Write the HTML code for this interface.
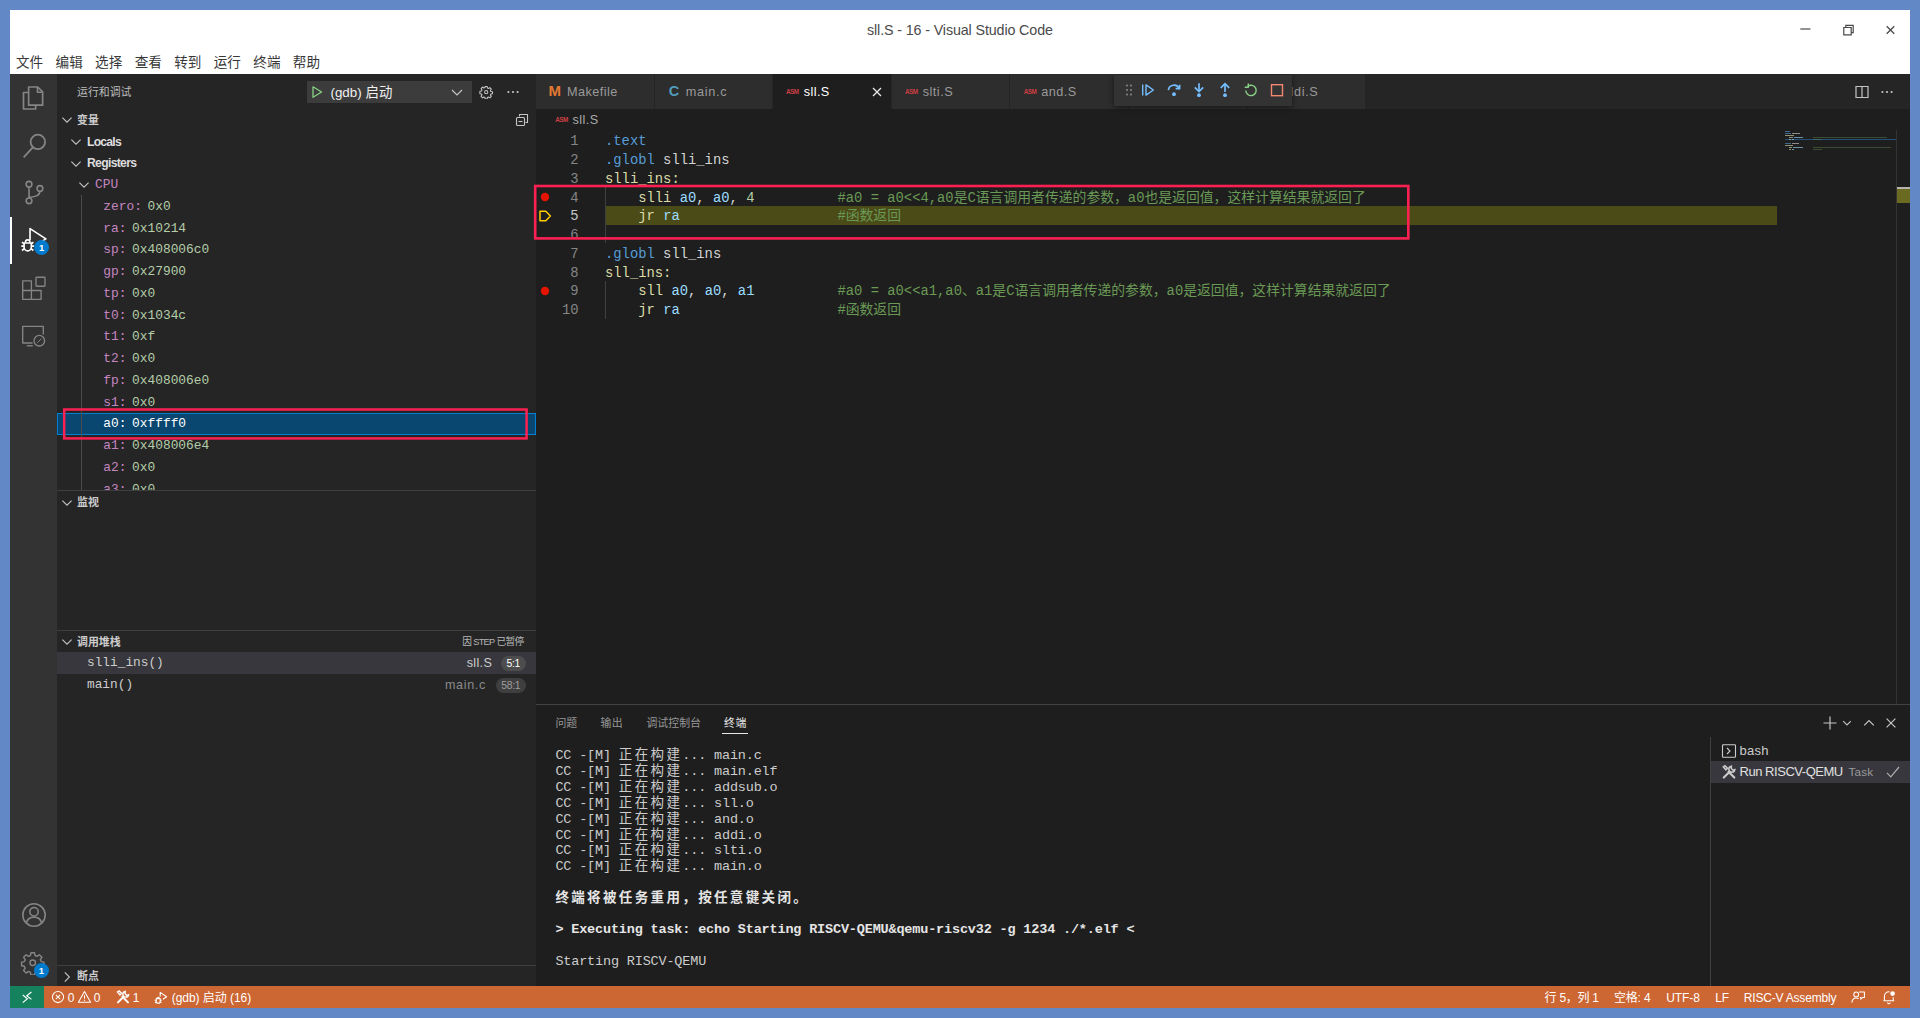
<!DOCTYPE html>
<html lang="zh-CN"><head><meta charset="utf-8"><title>sll.S - 16 - Visual Studio Code</title>
<style>
html,body{margin:0;padding:0;}
body{width:1920px;height:1018px;overflow:hidden;position:relative;background:#6388c6;
 font-family:"Liberation Sans","Noto Sans CJK SC",sans-serif;font-size:13px;color:#ccc;}
body>div,body>svg{position:absolute;box-sizing:border-box;white-space:pre;}
body>div{overflow:visible;}
.m{font-family:"Liberation Mono","Noto Sans CJK SC",monospace;}
.b{font-weight:bold;}
span.n{color:#c586c0;}
span.v{color:#b5cea8;}
span.k{color:#569cd6;}
span.r{color:#9cdcfe;}
span.c{color:#6a9955;}
span.f{color:#dcdcaa;}
span.d{color:#d4d4d4;}
span.cj{font-family:"Noto Sans CJK SC",sans-serif;line-height:0;}
.t{letter-spacing:-0.17px;}
span.tz{font-family:"Noto Sans CJK SC",sans-serif;letter-spacing:2.36px;line-height:0;}
span.gv{margin-left:5.6px;}
.h{letter-spacing:0px;}

</style></head>
<body>
<div style="left:10px;top:10px;width:1900px;height:998px;background:#1e1e1e;"></div>
<div style="left:10px;top:10px;width:1900px;height:64px;background:#ffffff;"></div>
<div style="left:867.0px;top:20.3px;height:20px;line-height:20px;font-size:14.3px;color:#4a4a4a;letter-spacing:-0.125px;">sll.S - 16 - Visual Studio Code</div>
<svg style="left:1798px;top:22px;" width="16" height="16" viewBox="0 0 16 16" fill="none"><path d="M2.300 7h10.200" stroke="#4a4a4a" stroke-width="1.2"/></svg>
<svg style="left:1840.5px;top:21.5px;" width="16" height="16" viewBox="0 0 16 16" fill="none"><path d="M2.800 5.500h7.400v7.400h-7.400z M4.800 5.300v-2h7.400v7.400h-1.800" stroke="#4a4a4a" stroke-width="1.2"/></svg>
<svg style="left:1883px;top:22px;" width="16" height="16" viewBox="0 0 16 16" fill="none"><path d="M3.700 4.200l7.600 7.600M11.300 4.200l-7.600 7.600" stroke="#4a4a4a" stroke-width="1.3"/></svg>
<div style="left:16.0px;top:53.0px;height:20px;line-height:20px;font-size:13.6px;color:#383838;">文件</div>
<div style="left:55.55px;top:53.0px;height:20px;line-height:20px;font-size:13.6px;color:#383838;">编辑</div>
<div style="left:95.1px;top:53.0px;height:20px;line-height:20px;font-size:13.6px;color:#383838;">选择</div>
<div style="left:134.65px;top:53.0px;height:20px;line-height:20px;font-size:13.6px;color:#383838;">查看</div>
<div style="left:174.2px;top:53.0px;height:20px;line-height:20px;font-size:13.6px;color:#383838;">转到</div>
<div style="left:213.75px;top:53.0px;height:20px;line-height:20px;font-size:13.6px;color:#383838;">运行</div>
<div style="left:253.3px;top:53.0px;height:20px;line-height:20px;font-size:13.6px;color:#383838;">终端</div>
<div style="left:292.85px;top:53.0px;height:20px;line-height:20px;font-size:13.6px;color:#383838;">帮助</div>
<div style="left:10px;top:74px;width:47px;height:912px;background:#333333;"></div>
<div style="left:57px;top:74px;width:479px;height:912px;background:#252526;"></div>
<div style="left:536px;top:74px;width:1374px;height:35px;background:#252526;"></div>
<div style="left:10px;top:986px;width:1900px;height:22px;background:#cc6633;"></div>
<div style="left:10px;top:986px;width:33.5px;height:22px;background:#16825d;"></div>
<svg style="left:18.4px;top:82.8px;" width="30" height="30" viewBox="0 0 24 24" fill="none"><g stroke="#858585" stroke-width="1.35" stroke-linejoin="round" fill="none"><path d="M8.5 6.5V3.2h7.3l3.9 3.9v10.6H8.5z"/><path d="M15.6 3.4v4h4"/><path d="M8.5 7.6H4.4v13.2h9.7v-3"/></g></svg>
<svg style="left:18.7px;top:129.7px;" width="31" height="31" viewBox="0 0 24 24" fill="none"><g stroke="#858585" stroke-width="1.4" fill="none"><circle cx="14.6" cy="9.2" r="5.6"/><path d="M10.7 13.4L3.6 21.2"/></g></svg>
<svg style="left:19.55px;top:178.45px;" width="28.5" height="28.5" viewBox="0 0 24 24" fill="none"><g stroke="#858585" stroke-width="1.35" fill="none"><circle cx="7.6" cy="5.2" r="2.4"/><circle cx="7.6" cy="19.2" r="2.4"/><circle cx="16.8" cy="8.8" r="2.4"/><path d="M7.6 7.6v9.2M16.8 11.2c0 3.6-3.6 4.4-9.2 5.2"/></g></svg>
<div style="left:10px;top:217px;width:2px;height:47px;background:#ffffff;"></div>
<svg style="left:20.0px;top:226.0px;" width="28" height="28" viewBox="0 0 24 24" fill="none"><g stroke="#ffffff" stroke-width="1.4" fill="none" stroke-linejoin="round"><path d="M8.600 12.100V2.200L22.200 11l-5.400 3.500"/><g transform="translate(-1.700,0.400)"><path d="M5.200 14.200h6.200v3.600a3.100 3.100 0 0 1-6.200 0z"/><path d="M6.400 14v-.600a1.900 1.900 0 0 1 3.800 0v.600"/><path d="M2.800 16.800h2.400M11.400 16.800h2.400M3.400 13.400l1.800 1.600M13.200 13.400l-1.800 1.600M3.400 20.600l2-1.600M13.200 20.600l-2-1.600"/></g></g></svg>
<div style="left:34.1px;top:240.3px;width:15px;height:15px;background:#007acc;border-radius:8px;"></div>
<div class="b" style="left:-358.4px;width:800px;text-align:center;top:240.3px;height:15px;line-height:15px;font-size:9.5px;color:#fff;">1</div>
<svg style="left:10px;top:270px;" width="48" height="38" viewBox="0 0 48 38" fill="none"><g stroke="#858585" stroke-width="1.35" fill="none" stroke-linejoin="round"><path d="M12.7 10.900h8.700v9.600h9.700v8.800H12.700z"/><path d="M12.700 20.500h8.700v8.800"/><rect x="26" y="7.200" width="9" height="9" rx="0.800"/></g></svg>
<svg style="left:10px;top:316px;" width="48" height="40" viewBox="0 0 48 40" fill="none"><g stroke="#858585" stroke-width="1.35" fill="none" stroke-linejoin="round"><path d="M22.600 27H12.700V10.400h20.600v8.200"/><path d="M16.800 29.800h6"/><circle cx="29.300" cy="24.700" r="5.300"/><path d="M27.300 26.700l4-4" stroke-width="1"/></g></svg>
<svg style="left:20.0px;top:901.0px;" width="28" height="28" viewBox="0 0 24 24" fill="none"><g stroke="#858585" stroke-width="1.35" fill="none"><circle cx="12" cy="12" r="9.6"/><circle cx="12" cy="9.2" r="3.6"/><path d="M5.4 18.8c1-3.4 3.4-5 6.6-5s5.6 1.6 6.6 5"/></g></svg>
<svg style="left:20.45px;top:949.95px;" width="25.5" height="25.5" viewBox="0 0 24 24" fill="none"><g stroke="#858585" stroke-width="1.35" fill="none" stroke-linejoin="round"><circle cx="12" cy="12" r="2.6"/><path d="M10.3 2.6h3.4l.5 2.6 1.8.8 2.2-1.5 2.4 2.4-1.5 2.2.8 1.8 2.6.5v3.4l-2.6.5-.8 1.8 1.5 2.2-2.4 2.4-2.2-1.5-1.8.8-.5 2.6h-3.4l-.5-2.6-1.8-.8-2.2 1.5-2.4-2.4 1.5-2.2-.8-1.8-2.6-.5v-3.4l2.6-.5.8-1.8-1.5-2.2 2.4-2.4 2.2 1.5 1.8-.8z"/></g></svg>
<div style="left:33.9px;top:962.7px;width:15px;height:15px;background:#007acc;border-radius:8px;"></div>
<div class="b" style="left:-358.6px;width:800px;text-align:center;top:962.7px;height:15px;line-height:15px;font-size:9.5px;color:#fff;">1</div>
<div style="left:77px;top:82.0px;height:20px;line-height:20px;font-size:10.9px;color:#bbbbbb;">运行和调试</div>
<div style="left:307px;top:81px;width:164.5px;height:21.5px;background:#3c3c3c;"></div>
<svg style="left:310px;top:85px;" width="14" height="14" viewBox="0 0 14 14" fill="none"><path d="M3 1.8l8.6 5.2L3 12.2z" stroke="#89d185" stroke-width="1.3" stroke-linejoin="round"/></svg>
<div style="left:330.4px;top:82.6px;height:20px;line-height:20px;font-size:13.4px;color:#f0f0f0;letter-spacing:0.029px;">(gdb) 启动</div>
<svg style="left:450px;top:85px;" width="14" height="14" viewBox="0 0 14 14" fill="none"><path d="M2 5l5 5 5-5" stroke="#c5c5c5" stroke-width="1.2"/></svg>
<svg style="left:479.3px;top:84.6px;" width="14.4" height="14.4" viewBox="0 0 16 16" fill="none"><g stroke="#c5c5c5" stroke-width="1.2" fill="none" stroke-linejoin="round"><circle cx="8" cy="8" r="1.8"/><path d="M6.9 1.6h2.2l.3 1.8 1.2.5 1.5-1 1.6 1.6-1 1.5.5 1.2 1.8.3v2.2l-1.8.3-.5 1.2 1 1.5-1.6 1.6-1.5-1-1.2.5-.3 1.8H6.9l-.3-1.8-1.2-.5-1.5 1-1.6-1.6 1-1.5-.5-1.2-1.8-.3V6.900l1.8-.3.5-1.2-1-1.5 1.600-1.600 1.5 1 1.2-.5z"/></g></svg>
<svg style="left:505px;top:84px;" width="16" height="16" viewBox="0 0 16 16" fill="none"><g fill="#c5c5c5"><circle cx="3.4" cy="8" r="1.1"/><circle cx="8" cy="8" r="1.1"/><circle cx="12.6" cy="8" r="1.1"/></g></svg>
<svg style="left:60px;top:113px;" width="14" height="14" viewBox="0 0 14 14" fill="none"><path d="M2.4 4.6L7 9.2l4.6-4.600" stroke="#c5c5c5" stroke-width="1.1"/></svg>
<div class="b" style="left:77px;top:109.5px;height:20px;line-height:20px;font-size:10.9px;color:#cccccc;">变量</div>
<svg style="left:513.6px;top:111.8px;" width="16" height="16" viewBox="0 0 16 16" fill="none"><g stroke="#c5c5c5" stroke-width="1.1" fill="none" stroke-linejoin="round"><path d="M5.500 4.500V2.500h8v8h-2"/><rect x="2.5" y="5.500" width="8" height="8" rx="1"/><path d="M4.500 9.500h4"/></g></svg>
<svg style="left:69px;top:135px;" width="14" height="14" viewBox="0 0 14 14" fill="none"><path d="M2.4 4.6L7 9.2l4.6-4.600" stroke="#c5c5c5" stroke-width="1.1"/></svg>
<div class="b" style="left:87.0px;top:131.6px;height:20px;line-height:20px;font-size:12.2px;color:#dddddd;letter-spacing:-0.771px;">Locals</div>
<svg style="left:69px;top:156.5px;" width="14" height="14" viewBox="0 0 14 14" fill="none"><path d="M2.4 4.6L7 9.2l4.6-4.600" stroke="#c5c5c5" stroke-width="1.1"/></svg>
<div class="b" style="left:87.0px;top:153.3px;height:20px;line-height:20px;font-size:12.2px;color:#dddddd;letter-spacing:-0.694px;">Registers</div>
<svg style="left:77px;top:178px;" width="14" height="14" viewBox="0 0 14 14" fill="none"><path d="M2.4 4.6L7 9.2l4.6-4.600" stroke="#c5c5c5" stroke-width="1.1"/></svg>
<div class="m h" style="left:95px;top:175.0px;height:20px;line-height:20px;font-size:12.86px;color:#ccc;"><span class="n">CPU</span></div>
<div style="left:57px;top:413px;width:479px;height:22px;background:#094771;border:1px solid #007fd4;"></div>
<div style="left:81px;top:195px;width:1px;height:295px;background:#4c4c4c;"></div>
<div class="m h" style="left:103.3px;top:196.85px;height:20px;line-height:20px;font-size:12.86px;color:#ccc;"><span class="n">zero:</span><span class="v gv">0x0</span></div>
<div class="m h" style="left:103.3px;top:218.6px;height:20px;line-height:20px;font-size:12.86px;color:#ccc;"><span class="n">ra:</span><span class="v gv">0x10214</span></div>
<div class="m h" style="left:103.3px;top:240.35px;height:20px;line-height:20px;font-size:12.86px;color:#ccc;"><span class="n">sp:</span><span class="v gv">0x408006c0</span></div>
<div class="m h" style="left:103.3px;top:262.1px;height:20px;line-height:20px;font-size:12.86px;color:#ccc;"><span class="n">gp:</span><span class="v gv">0x27900</span></div>
<div class="m h" style="left:103.3px;top:283.85px;height:20px;line-height:20px;font-size:12.86px;color:#ccc;"><span class="n">tp:</span><span class="v gv">0x0</span></div>
<div class="m h" style="left:103.3px;top:305.6px;height:20px;line-height:20px;font-size:12.86px;color:#ccc;"><span class="n">t0:</span><span class="v gv">0x1034c</span></div>
<div class="m h" style="left:103.3px;top:327.35px;height:20px;line-height:20px;font-size:12.86px;color:#ccc;"><span class="n">t1:</span><span class="v gv">0xf</span></div>
<div class="m h" style="left:103.3px;top:349.1px;height:20px;line-height:20px;font-size:12.86px;color:#ccc;"><span class="n">t2:</span><span class="v gv">0x0</span></div>
<div class="m h" style="left:103.3px;top:370.85px;height:20px;line-height:20px;font-size:12.86px;color:#ccc;"><span class="n">fp:</span><span class="v gv">0x408006e0</span></div>
<div class="m h" style="left:103.3px;top:392.6px;height:20px;line-height:20px;font-size:12.86px;color:#ccc;"><span class="n">s1:</span><span class="v gv">0x0</span></div>
<div class="m h" style="left:103.3px;top:414.35px;height:20px;line-height:20px;font-size:12.86px;color:#ccc;"><span style="color:#ffffff">a0:</span><span class="gv" style="color:#ffffff">0xffff0</span></div>
<div class="m h" style="left:103.3px;top:436.1px;height:20px;line-height:20px;font-size:12.86px;color:#ccc;"><span class="n">a1:</span><span class="v gv">0x408006e4</span></div>
<div class="m h" style="left:103.3px;top:457.85px;height:20px;line-height:20px;font-size:12.86px;color:#ccc;"><span class="n">a2:</span><span class="v gv">0x0</span></div>
<div style="left:58px;top:478px;width:478px;height:12px;overflow:hidden;"><div class="m" style="position:absolute;left:45.3px;top:1.5px;height:20px;line-height:20px;font-size:12.86px;"><span class="n">a3:</span><span class="v gv">0x0</span></div></div>
<svg style="left:60px;top:405px;" width="472" height="38" viewBox="0 0 472 38" fill="none"><rect x="4.200" y="4.500" width="462.400" height="28.900" stroke="#fa2052" stroke-width="2.500"/></svg>
<div style="left:57px;top:490px;width:479px;height:1px;background:#3f3f41;"></div>
<svg style="left:60px;top:495.5px;" width="14" height="14" viewBox="0 0 14 14" fill="none"><path d="M2.4 4.6L7 9.2l4.6-4.600" stroke="#c5c5c5" stroke-width="1.1"/></svg>
<div class="b" style="left:77px;top:492.0px;height:20px;line-height:20px;font-size:10.9px;color:#cccccc;">监视</div>
<div style="left:57px;top:630px;width:479px;height:1px;background:#3f3f41;"></div>
<svg style="left:60px;top:635px;" width="14" height="14" viewBox="0 0 14 14" fill="none"><path d="M2.4 4.6L7 9.2l4.6-4.600" stroke="#c5c5c5" stroke-width="1.1"/></svg>
<div class="b" style="left:77px;top:631.5px;height:20px;line-height:20px;font-size:10.9px;color:#cccccc;">调用堆栈</div>
<div style="left:462.2px;top:631.8px;height:20px;line-height:20px;font-size:9.7px;color:#b5b5b5;letter-spacing:-0.676px;">因 <span style="font-size:9.2px">STEP</span> 已暂停</div>
<div style="left:57px;top:652px;width:479px;height:21.5px;background:#37373d;"></div>
<div class="m" style="left:87px;top:652.7px;height:20px;line-height:20px;font-size:12.8px;color:#cccccc;">slli_ins()</div>
<div style="left:466.7px;top:653.4px;height:20px;line-height:20px;font-size:12.6px;color:#cccccc;letter-spacing:0.341px;">sll.S</div>
<div style="left:501px;top:656px;width:24.5px;height:15px;background:#4d4d4d;border-radius:8px;"></div>
<div style="left:113.2px;width:800px;text-align:center;top:656.0px;height:15px;line-height:15px;font-size:10.4px;color:#ffffff;letter-spacing:-0.3px;">5:1</div>
<div class="m" style="left:87px;top:674.7px;height:20px;line-height:20px;font-size:12.8px;color:#cccccc;">main()</div>
<div style="left:445.0px;top:675.2px;height:20px;line-height:20px;font-size:12.6px;color:#8a8a8a;letter-spacing:0.618px;">main.c</div>
<div style="left:496px;top:678px;width:29.5px;height:15px;background:#3f3f3f;border-radius:8px;"></div>
<div style="left:110.8px;width:800px;text-align:center;top:678.0px;height:15px;line-height:15px;font-size:10.4px;color:#9d9d9d;letter-spacing:-0.3px;">58:1</div>
<div style="left:57px;top:965px;width:479px;height:1px;background:#3f3f41;"></div>
<svg style="left:60px;top:969.5px;" width="14" height="14" viewBox="0 0 14 14" fill="none"><path d="M4.800 2.4L9.4 7l-4.600 4.600" stroke="#c5c5c5" stroke-width="1.1"/></svg>
<div class="b" style="left:77px;top:966.0px;height:20px;line-height:20px;font-size:10.9px;color:#cccccc;">断点</div>
<div style="left:536.0px;top:74px;width:118.6px;height:35px;background:#2d2d2d;border-right:1px solid #252526;"></div>
<div class="b" style="left:548.5px;top:81.2px;height:20px;line-height:20px;font-size:15px;color:#e37933;letter-spacing:-1px;">M</div>
<div style="left:567.0px;top:82.3px;height:20px;line-height:20px;font-size:12.7px;color:#9a9a9a;letter-spacing:0.431px;">Makefile</div>
<div style="left:654.6px;top:74px;width:118.6px;height:35px;background:#2d2d2d;border-right:1px solid #252526;"></div>
<div class="b" style="left:668.7px;top:81.2px;height:20px;line-height:20px;font-size:14.5px;color:#519aba;">C</div>
<div style="left:685.7px;top:82.3px;height:20px;line-height:20px;font-size:12.7px;color:#9a9a9a;letter-spacing:0.704px;">main.c</div>
<div style="left:773.2px;top:74px;width:118.6px;height:35px;background:#1e1e1e;border-right:1px solid #252526;"></div>
<div class="b" style="left:786px;top:85.6px;height:12px;line-height:12px;font-size:6.3px;color:#cc3e44;letter-spacing:-0.45px;">ASM</div>
<div style="left:803.7px;top:82.3px;height:20px;line-height:20px;font-size:12.7px;color:#ffffff;letter-spacing:0.406px;">sll.S</div>
<svg style="left:868.7px;top:84px;" width="16" height="16" viewBox="0 0 16 16" fill="none"><path d="M4 4l8 8M12 4l-8 8" stroke="#e8e8e8" stroke-width="1.25"/></svg>
<div style="left:891.8px;top:74px;width:118.6px;height:35px;background:#2d2d2d;border-right:1px solid #252526;"></div>
<div class="b" style="left:905px;top:85.6px;height:12px;line-height:12px;font-size:6.3px;color:#cc3e44;letter-spacing:-0.45px;">ASM</div>
<div style="left:922.7px;top:82.3px;height:20px;line-height:20px;font-size:12.7px;color:#9a9a9a;letter-spacing:0.483px;">slti.S</div>
<div style="left:1010.4px;top:74px;width:118.6px;height:35px;background:#2d2d2d;border-right:1px solid #252526;"></div>
<div class="b" style="left:1023.7px;top:85.6px;height:12px;line-height:12px;font-size:6.3px;color:#cc3e44;letter-spacing:-0.45px;">ASM</div>
<div style="left:1041.3px;top:82.3px;height:20px;line-height:20px;font-size:12.7px;color:#9a9a9a;letter-spacing:0.449px;">and.S</div>
<div style="left:1129.0px;top:74px;width:118.6px;height:35px;background:#2d2d2d;border-right:1px solid #252526;"></div>
<div class="b" style="left:1142.3px;top:85.6px;height:12px;line-height:12px;font-size:6.3px;color:#cc3e44;letter-spacing:-0.45px;">ASM</div>
<div style="left:1159.9px;top:82.3px;height:20px;line-height:20px;font-size:12.7px;color:#9a9a9a;letter-spacing:-0.128px;">addsub.S</div>
<div style="left:1247.6px;top:74px;width:118.6px;height:35px;background:#2d2d2d;border-right:1px solid #252526;"></div>
<div class="b" style="left:1260.9px;top:85.6px;height:12px;line-height:12px;font-size:6.3px;color:#cc3e44;letter-spacing:-0.45px;">ASM</div>
<div style="left:1278.5px;top:82.3px;height:20px;line-height:20px;font-size:12.7px;color:#9a9a9a;letter-spacing:0.669px;">addi.S</div>
<svg style="left:1854px;top:83.7px;" width="16" height="16" viewBox="0 0 16 16" fill="none"><path d="M2 2.500h12v11H2zM8 2.500v11" stroke="#c5c5c5" stroke-width="1.2"/></svg>
<svg style="left:1879.3px;top:84px;" width="16" height="16" viewBox="0 0 16 16" fill="none"><g fill="#c5c5c5"><circle cx="3.4" cy="8" r="1.1"/><circle cx="8" cy="8" r="1.1"/><circle cx="12.600" cy="8" r="1.1"/></g></svg>
<div style="left:1100px;top:74px;width:210px;height:42px;overflow:hidden;"><div style="position:absolute;left:14px;top:1px;width:177.5px;height:31px;background:#333333;box-shadow:0 1px 5px rgba(0,0,0,0.55);"></div></div>
<svg style="left:1121px;top:82px;" width="16" height="16" viewBox="0 0 16 16" fill="none"><g fill="#8a8a8a"><circle cx="6" cy="3.6" r="1"/><circle cx="10" cy="3.6" r="1"/><circle cx="6" cy="8" r="1"/><circle cx="10" cy="8" r="1"/><circle cx="6" cy="12.400" r="1"/><circle cx="10" cy="12.400" r="1"/></g></svg>
<svg style="left:1140px;top:82px;" width="16" height="16" viewBox="0 0 16 16" fill="none"><g stroke="#75beff" stroke-width="1.4" fill="none" stroke-linejoin="round"><path d="M2.700 2.400v11.2"/><path d="M6 2.900l7.400 5.100L6 13.100z"/></g></svg>
<svg style="left:1166px;top:82px;" width="16" height="16" viewBox="0 0 16 16" fill="none"><g stroke="#75beff" stroke-width="1.700" fill="none"><path d="M2.400 8.200a5.600 5.600 0 0 1 10.700-1.700"/><path d="M9.600 6.700h4V2.700" stroke-linejoin="round"/></g><circle cx="8" cy="12.200" r="1.900" fill="#75beff"/></svg>
<svg style="left:1191px;top:82px;" width="16" height="16" viewBox="0 0 16 16" fill="none"><g stroke="#75beff" stroke-width="1.700" fill="none"><path d="M8 1.200v8"/><path d="M3.800 5.400L8 9.600l4.200-4.200"/></g><circle cx="8" cy="13.200" r="1.900" fill="#75beff"/></svg>
<svg style="left:1217px;top:82px;" width="16" height="16" viewBox="0 0 16 16" fill="none"><g stroke="#75beff" stroke-width="1.700" fill="none"><path d="M8 10v-8"/><path d="M3.800 5.800L8 1.600l4.200 4.200"/></g><circle cx="8" cy="13.200" r="1.900" fill="#75beff"/></svg>
<svg style="left:1243px;top:82px;" width="16" height="16" viewBox="0 0 16 16" fill="none"><g stroke="#89d185" stroke-width="1.4" fill="none"><path d="M4.700 4.400a5.200 5.200 0 1 1-1.900 4.100"/><path d="M5.300 1.600v3.600h-3.600" stroke-linejoin="round"/></g></svg>
<svg style="left:1268.8px;top:82px;" width="16" height="16" viewBox="0 0 16 16" fill="none"><rect x="2.500" y="2.700" width="11" height="11" stroke="#f48771" stroke-width="1.4"/></svg>
<div class="b" style="left:555.2px;top:114.0px;height:12px;line-height:12px;font-size:6.3px;color:#cc3e44;letter-spacing:-0.45px;">ASM</div>
<div style="left:572.5px;top:110.4px;height:20px;line-height:20px;font-size:12.7px;color:#a9a9a9;letter-spacing:0.406px;">sll.S</div>
<div style="left:605.5px;top:205.87px;width:1171.5px;height:18.78px;background:#4b4b18;"></div>
<div style="left:605px;top:187.09px;width:1px;height:56.34px;background:#404040;"></div>
<div style="left:605px;top:280.99px;width:1px;height:37.56px;background:#404040;"></div>
<div class="m" style="right:1341.4px;top:132.24px;height:19px;line-height:19px;font-size:13.84px;color:#858585;">1</div>
<div class="m" style="left:605.0px;top:132.24px;height:19px;line-height:19px;font-size:13.84px;color:#d4d4d4;"><span class="k">.text</span></div>
<div class="m" style="right:1341.4px;top:151.02px;height:19px;line-height:19px;font-size:13.84px;color:#858585;">2</div>
<div class="m" style="left:605.0px;top:151.02px;height:19px;line-height:19px;font-size:13.84px;color:#d4d4d4;"><span class="k">.globl</span> slli_ins</div>
<div class="m" style="right:1341.4px;top:169.8px;height:19px;line-height:19px;font-size:13.84px;color:#858585;">3</div>
<div class="m" style="left:605.0px;top:169.8px;height:19px;line-height:19px;font-size:13.84px;color:#d4d4d4;"><span class="f">slli_ins:</span></div>
<div class="m" style="right:1341.4px;top:188.58px;height:19px;line-height:19px;font-size:13.84px;color:#858585;">4</div>
<div class="m" style="left:605.0px;top:188.58px;height:19px;line-height:19px;font-size:13.84px;color:#d4d4d4;">    <span class="f">slli</span> <span class="r">a0</span>, <span class="r">a0</span>, <span class="v">4</span>          <span class="c">#a0 = a0&lt;&lt;4,a0是C语言调用者传递的参数，a0也是返回值，这样计算结果就返回了</span></div>
<div class="m" style="right:1341.4px;top:207.36px;height:19px;line-height:19px;font-size:13.84px;color:#c6c6c6;">5</div>
<div class="m" style="left:605.0px;top:207.36px;height:19px;line-height:19px;font-size:13.84px;color:#d4d4d4;">    <span class="f">jr</span> <span class="r">ra</span>                   <span class="c">#函数返回</span></div>
<div class="m" style="right:1341.4px;top:226.14px;height:19px;line-height:19px;font-size:13.84px;color:#858585;">6</div>
<div class="m" style="right:1341.4px;top:244.92px;height:19px;line-height:19px;font-size:13.84px;color:#858585;">7</div>
<div class="m" style="left:605.0px;top:244.92px;height:19px;line-height:19px;font-size:13.84px;color:#d4d4d4;"><span class="k">.globl</span> sll_ins</div>
<div class="m" style="right:1341.4px;top:263.7px;height:19px;line-height:19px;font-size:13.84px;color:#858585;">8</div>
<div class="m" style="left:605.0px;top:263.7px;height:19px;line-height:19px;font-size:13.84px;color:#d4d4d4;"><span class="f">sll_ins:</span></div>
<div class="m" style="right:1341.4px;top:282.48px;height:19px;line-height:19px;font-size:13.84px;color:#858585;">9</div>
<div class="m" style="left:605.0px;top:282.48px;height:19px;line-height:19px;font-size:13.84px;color:#d4d4d4;">    <span class="f">sll</span> <span class="r">a0</span>, <span class="r">a0</span>, <span class="r">a1</span>          <span class="c">#a0 = a0&lt;&lt;a1,a0、a1是C语言调用者传递的参数，a0是返回值，这样计算结果就返回了</span></div>
<div class="m" style="right:1341.4px;top:301.26px;height:19px;line-height:19px;font-size:13.84px;color:#858585;">10</div>
<div class="m" style="left:605.0px;top:301.26px;height:19px;line-height:19px;font-size:13.84px;color:#d4d4d4;">    <span class="f">jr</span> <span class="r">ra</span>                   <span class="c">#函数返回</span></div>
<svg style="left:537px;top:188.78px;" width="16" height="16" viewBox="0 0 16 16" fill="none"><circle cx="8" cy="8" r="4.200" fill="#e51400"/></svg>
<svg style="left:537px;top:282.68px;" width="16" height="16" viewBox="0 0 16 16" fill="none"><circle cx="8" cy="8" r="4.200" fill="#e51400"/></svg>
<svg style="left:537px;top:207.56px;" width="16" height="16" viewBox="0 0 16 16" fill="none"><path d="M3 3.300h5.800l4.600 4.700-4.600 4.700H3z" stroke="#ffcc00" stroke-width="1.5" stroke-linejoin="round"/></svg>
<svg style="left:530px;top:180px;" width="884" height="64" viewBox="0 0 884 64" fill="none"><rect x="5.200" y="6" width="873.100" height="52.400" stroke="#fa2052" stroke-width="2.600"/></svg>
<div style="left:1785px;top:138.5px;width:111px;height:1px;background:#23507a;"></div>
<div style="left:1785px;top:130.7px;width:5px;height:1.5px;background:#569cd6;opacity:0.6;"></div>
<div style="left:1785px;top:132.7px;width:6px;height:1.5px;background:#569cd6;opacity:0.6;"></div>
<div style="left:1792px;top:132.7px;width:8px;height:1.5px;background:#d4d4d4;opacity:0.6;"></div>
<div style="left:1785px;top:134.7px;width:9px;height:1.5px;background:#dcdcaa;opacity:0.6;"></div>
<div style="left:1789px;top:136.7px;width:4px;height:1.5px;background:#dcdcaa;opacity:0.6;"></div>
<div style="left:1794px;top:136.7px;width:9px;height:1.5px;background:#9cdcfe;opacity:0.6;"></div>
<div style="left:1813px;top:136.7px;width:74px;height:1.5px;background:#6a9955;opacity:0.38;"></div>
<div style="left:1789px;top:138.7px;width:2px;height:1.5px;background:#dcdcaa;opacity:0.6;"></div>
<div style="left:1792px;top:138.7px;width:2px;height:1.5px;background:#9cdcfe;opacity:0.6;"></div>
<div style="left:1813px;top:138.7px;width:9px;height:1.5px;background:#6a9955;opacity:0.38;"></div>
<div style="left:1785px;top:142.7px;width:6px;height:1.5px;background:#569cd6;opacity:0.6;"></div>
<div style="left:1792px;top:142.7px;width:7px;height:1.5px;background:#d4d4d4;opacity:0.6;"></div>
<div style="left:1785px;top:144.7px;width:8px;height:1.5px;background:#dcdcaa;opacity:0.6;"></div>
<div style="left:1789px;top:146.7px;width:3px;height:1.5px;background:#dcdcaa;opacity:0.6;"></div>
<div style="left:1793px;top:146.7px;width:10px;height:1.5px;background:#9cdcfe;opacity:0.6;"></div>
<div style="left:1813px;top:146.7px;width:78px;height:1.5px;background:#6a9955;opacity:0.38;"></div>
<div style="left:1789px;top:148.7px;width:2px;height:1.5px;background:#dcdcaa;opacity:0.6;"></div>
<div style="left:1792px;top:148.7px;width:2px;height:1.5px;background:#9cdcfe;opacity:0.6;"></div>
<div style="left:1813px;top:148.7px;width:9px;height:1.5px;background:#6a9955;opacity:0.38;"></div>
<div style="left:1896px;top:130px;width:1px;height:574px;background:#333334;"></div>
<div style="left:1897px;top:187px;width:13px;height:16px;background:#6a6a20;border-top:2px solid #b4b4ac;"></div>
<div style="left:536px;top:704px;width:1374px;height:1px;background:#414141;"></div>
<div style="left:555.4px;top:713.0px;height:20px;line-height:20px;font-size:10.9px;color:#969696;letter-spacing:-0.098px;">问题</div>
<div style="left:600.4px;top:713.0px;height:20px;line-height:20px;font-size:10.9px;color:#969696;letter-spacing:0.552px;">输出</div>
<div style="left:646.4px;top:713.0px;height:20px;line-height:20px;font-size:10.9px;color:#969696;letter-spacing:0.026px;">调试控制台</div>
<div style="left:724.0px;top:713.0px;height:20px;line-height:20px;font-size:10.9px;color:#e7e7e7;letter-spacing:0.602px;">终端</div>
<div style="left:722px;top:733px;width:26.3px;height:1px;background:#e7e7e7;"></div>
<svg style="left:1822px;top:714.5px;" width="16" height="16" viewBox="0 0 16 16" fill="none"><path d="M8 1.500v13M1.500 8h13" stroke="#c5c5c5" stroke-width="1.2"/></svg>
<svg style="left:1840.7px;top:716.5px;" width="12" height="12" viewBox="0 0 12 12" fill="none"><path d="M2.200 4.200L6 8l3.800-3.800" stroke="#c5c5c5" stroke-width="1.1"/></svg>
<svg style="left:1861.3px;top:714.5px;" width="16" height="16" viewBox="0 0 16 16" fill="none"><path d="M3.200 10.300L8 5.500l4.800 4.800" stroke="#c5c5c5" stroke-width="1.2"/></svg>
<svg style="left:1882.7px;top:714.5px;" width="16" height="16" viewBox="0 0 16 16" fill="none"><path d="M3.600 3.600l8.800 8.800M12.400 3.600l-8.800 8.800" stroke="#c5c5c5" stroke-width="1.2"/></svg>
<div class="m t" style="left:555.4px;top:748.4px;height:16px;line-height:16px;font-size:13.5px;color:#cccccc;">CC -[M] <span class="tz">正在构建</span>... main.c</div>
<div class="m t" style="left:555.4px;top:764.22px;height:16px;line-height:16px;font-size:13.5px;color:#cccccc;">CC -[M] <span class="tz">正在构建</span>... main.elf</div>
<div class="m t" style="left:555.4px;top:780.04px;height:16px;line-height:16px;font-size:13.5px;color:#cccccc;">CC -[M] <span class="tz">正在构建</span>... addsub.o</div>
<div class="m t" style="left:555.4px;top:795.86px;height:16px;line-height:16px;font-size:13.5px;color:#cccccc;">CC -[M] <span class="tz">正在构建</span>... sll.o</div>
<div class="m t" style="left:555.4px;top:811.68px;height:16px;line-height:16px;font-size:13.5px;color:#cccccc;">CC -[M] <span class="tz">正在构建</span>... and.o</div>
<div class="m t" style="left:555.4px;top:827.5px;height:16px;line-height:16px;font-size:13.5px;color:#cccccc;">CC -[M] <span class="tz">正在构建</span>... addi.o</div>
<div class="m t" style="left:555.4px;top:843.32px;height:16px;line-height:16px;font-size:13.5px;color:#cccccc;">CC -[M] <span class="tz">正在构建</span>... slti.o</div>
<div class="m t" style="left:555.4px;top:859.14px;height:16px;line-height:16px;font-size:13.5px;color:#cccccc;">CC -[M] <span class="tz">正在构建</span>... main.o</div>
<div class="m t b" style="left:555.4px;top:890.78px;height:16px;line-height:16px;font-size:13.5px;color:#e5e5e5;"><span class="tz">终端将被任务重用，按任意键关闭。</span></div>
<div class="m t b" style="left:555.4px;top:922.42px;height:16px;line-height:16px;font-size:13.5px;color:#e5e5e5;">&gt; Executing task: echo Starting RISCV-QEMU&amp;qemu-riscv32 -g 1234 ./*.elf &lt;</div>
<div class="m t" style="left:555.4px;top:954.06px;height:16px;line-height:16px;font-size:13.5px;color:#cccccc;">Starting RISCV-QEMU</div>
<div style="left:1710px;top:737px;width:1px;height:249px;background:#414141;"></div>
<div style="left:1711px;top:761px;width:199px;height:21.5px;background:#37373d;"></div>
<svg style="left:1721px;top:742.5px;" width="16" height="16" viewBox="0 0 16 16" fill="none"><g stroke="#cccccc" stroke-width="1.1" fill="none"><rect x="1.500" y="1.700" width="13" height="12.600" rx="0.800"/><path d="M6 5l3 3-3 3"/></g></svg>
<div style="left:1739.5px;top:741.0px;height:20px;line-height:20px;font-size:13px;color:#cccccc;letter-spacing:0.274px;">bash</div>
<svg style="left:1721px;top:764px;" width="16" height="16" viewBox="0 0 16 16" fill="none"><g stroke="#cccccc" stroke-width="2.100" fill="none" stroke-linecap="round"><path d="M2.800 13.600l5.600-5.600"/><path d="M13.300 13.600L7.500 7.800"/></g><g stroke="#cccccc" stroke-width="1.500" fill="none"><path d="M10.400 2.200a3 3 0 1 0 3.400 3.400l-1.800.600-1.700-1.700z"/><path d="M2.300 2.800l1.700-1.100 2.500 2.500-1.600 1.600z"/></g></svg>
<div style="left:1739.5px;top:762.2px;height:20px;line-height:20px;font-size:13px;color:#e0e0e0;letter-spacing:-0.465px;">Run RISCV-QEMU</div>
<div style="left:1848.6px;top:762.0px;height:20px;line-height:20px;font-size:11.7px;color:#9a9a9a;letter-spacing:0.117px;">Task</div>
<svg style="left:1884.5px;top:764px;" width="16" height="16" viewBox="0 0 16 16" fill="none"><path d="M2 8.800l3.800 4L14 3" stroke="#b0b0b0" stroke-width="1.2"/></svg>
<svg style="left:10px;top:986px;" width="34" height="22" viewBox="0 0 34 22" fill="none"><g stroke="#ffffff" stroke-width="1.150" fill="none"><path d="M12.800 9l4.600 3.800-4.600 3.800"/><path d="M21.400 6l-4.600 3.700 4.600 3.700"/></g></svg>
<svg style="left:50.7px;top:989.2px;" width="14" height="16" viewBox="0 0 14 16" fill="none"><g stroke="#ffffff" stroke-width="1.050" fill="none"><circle cx="7" cy="8" r="5.600"/><path d="M4.800 5.800l4.400 4.400M9.200 5.800l-4.400 4.400"/></g></svg>
<div style="left:67.8px;top:988.0px;height:20px;line-height:20px;font-size:12px;color:#ffffff;letter-spacing:0.013px;">0</div>
<svg style="left:76.5px;top:989.2px;" width="15" height="16" viewBox="0 0 15 16" fill="none"><g stroke="#ffffff" stroke-width="1.050" fill="none" stroke-linejoin="round"><path d="M7.500 2.400L13.600 13.200H1.400z"/><path d="M7.500 6.200v3.600M7.500 10.800v1.200"/></g></svg>
<div style="left:93.8px;top:988.0px;height:20px;line-height:20px;font-size:12px;color:#ffffff;letter-spacing:0.013px;">0</div>
<svg style="left:114.5px;top:989.4px;" width="16" height="16" viewBox="0 0 16 16" fill="none"><g stroke="#ffffff" stroke-width="2" fill="none" stroke-linecap="round"><path d="M3 13.400l5.600-5.600"/><path d="M13 13.400L7.400 7.800"/></g><g stroke="#ffffff" stroke-width="1.400" fill="none"><path d="M10.200 2.400a2.900 2.900 0 1 0 3.400 3.400l-1.800.600-1.700-1.700z"/><path d="M2.400 3l1.700-1.100 2.400 2.400L5 5.900z"/></g></svg>
<div style="left:132.8px;top:988.0px;height:20px;line-height:20px;font-size:12px;color:#ffffff;letter-spacing:-0.988px;">1</div>
<svg style="left:153px;top:989.2px;" width="16" height="16" viewBox="0 0 16 16" fill="none"><g stroke="#ffffff" stroke-width="1.100" fill="none" stroke-linejoin="round"><path d="M7.200 7.600V3.400l6.400 4.400-3.600 2.400"/><path d="M3.200 9.600h4v2.600a2 2 0 0 1-4 0z"/><path d="M4 9.400a1.200 1.200 0 0 1 2.400 0"/><path d="M1.600 11.200h1.600M7.200 11.200h1.600M2 13.800l1.400-1M8.400 13.800l-1.400-1"/></g></svg>
<div style="left:171.8px;top:988.0px;height:20px;line-height:20px;font-size:12px;color:#ffffff;letter-spacing:-0.049px;">(gdb) 启动 (16)</div>
<div style="left:1544.6px;top:988.0px;height:20px;line-height:20px;font-size:12px;color:#ffffff;letter-spacing:-0.276px;">行 5，列 1</div>
<div style="left:1613.9px;top:988.0px;height:20px;line-height:20px;font-size:12px;color:#ffffff;letter-spacing:-0.169px;">空格: 4</div>
<div style="left:1666.2px;top:988.0px;height:20px;line-height:20px;font-size:12px;color:#ffffff;letter-spacing:-0.080px;">UTF-8</div>
<div style="left:1715.2px;top:988.0px;height:20px;line-height:20px;font-size:12px;color:#ffffff;letter-spacing:-0.208px;">LF</div>
<div style="left:1743.8px;top:988.0px;height:20px;line-height:20px;font-size:12px;color:#ffffff;letter-spacing:-0.197px;">RISC-V Assembly</div>
<svg style="left:1850.3px;top:989.2px;" width="16" height="16" viewBox="0 0 16 16" fill="none"><g stroke="#ffffff" stroke-width="1.050" fill="none" stroke-linejoin="round"><circle cx="6.200" cy="5.400" r="2.400"/><path d="M1.800 13.600c.400-3 2-4.600 4.400-4.600 1 0 1.800.300 2.400.700"/><path d="M9 3h5.400v5.400h-1.800l-1.800 1.800V8.400H9.800"/></g></svg>
<svg style="left:1881px;top:989.2px;" width="16" height="16" viewBox="0 0 16 16" fill="none"><g stroke="#ffffff" stroke-width="1.050" fill="none" stroke-linejoin="round"><path d="M3.400 11.600V7.200a4.400 4.400 0 0 1 5.200-4.300M12.200 8.200v3.400M2.400 11.700h10.800M6.600 13.400a1.300 1.300 0 0 0 2.600 0"/></g><circle cx="11.600" cy="4.600" r="2.300" fill="#ffffff"/></svg>
</body></html>
